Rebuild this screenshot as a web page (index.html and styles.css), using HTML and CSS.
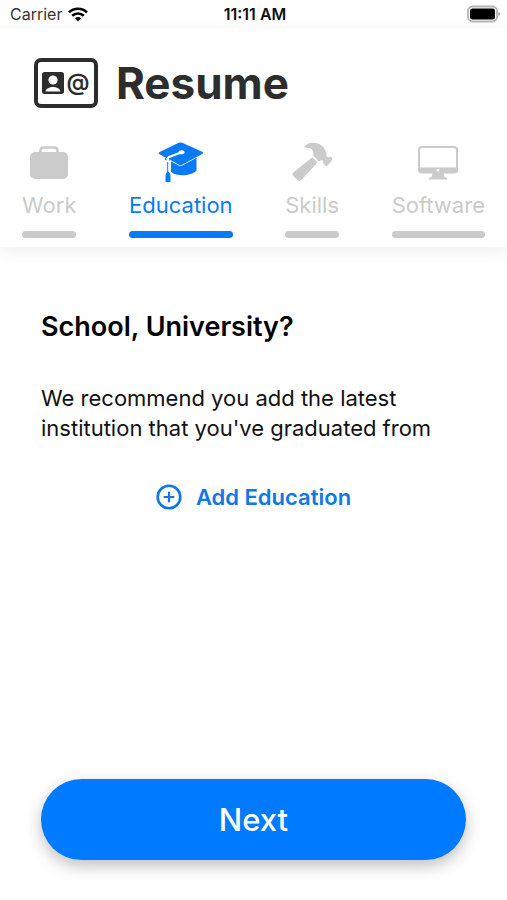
FILE: index.html
```html
<!DOCTYPE html>
<html lang="en">
<head>
<meta charset="utf-8">
<meta name="viewport" content="width=device-width, initial-scale=1">
<title>Resume</title>
<link rel="stylesheet" href="styles.css">
</head>
<body>
<div class="status">
  <div class="carrier">Carrier
    <svg width="20" height="15" viewBox="0 0 20 15" fill="none" stroke="#000" stroke-width="2.6" aria-hidden="true">
      <path d="M1 5.4C6 .6 14 .6 19 5.4"/>
      <path d="M4.2 8.8c3.300-3.100 8.300-3.100 11.600 0"/>
      <path d="M7 11.300c1.800-1.600 4.200-1.600 6 0L10 14.400z" fill="#000" stroke="none"/>
    </svg>
  </div>
  <time class="clock">11:11 AM</time>
  <svg class="battery" width="34" height="18" viewBox="0 0 34 18" aria-hidden="true">
    <rect x="2" y="1.500" width="29" height="15" rx="4.500" fill="#fff" stroke="#b5b5b5" stroke-width="1.800"/>
    <rect x="4" y="3.500" width="25" height="11" rx="2.500"/>
    <path d="M32.300 7c2 .5 2 3.500 0 4z" fill="#999"/>
  </svg>
</div>
<header class="header">
  <div class="brand">
    <svg width="64" height="50" viewBox="0 0 64 50" aria-hidden="true">
      <rect x="2" y="2" width="60" height="46" rx="5" fill="none" stroke="#2d2d2d" stroke-width="4"/>
      <rect x="8" y="14" width="22" height="22" rx="2.500" fill="#2d2d2d"/>
      <circle cx="19" cy="22" r="4.600" fill="#fff"/>
      <path d="M11.500 33.500c1-6 14-6 15 0z" fill="#fff"/>
      <text class="at" x="44" y="32" text-anchor="middle">@</text>
    </svg>
    <h1>Resume</h1>
  </div>
  <nav class="tabs">
    <a class="tab" href="#work">
      <svg width="40" height="42" viewBox="0 0 40 42" fill="currentColor" aria-hidden="true">
        <rect x="1" y="11" width="38" height="27" rx="5"/>
        <path d="M11.500 13V9.500q0-3 3-3h11q3 0 3 3V13" fill="none" stroke="currentColor" stroke-width="2.500"/>
      </svg>
      <span>Work</span>
    </a>
    <a class="tab active" href="#education" aria-current="page">
      <svg width="46" height="42" viewBox="0 0 46 42" fill="currentColor" aria-hidden="true">
        <path d="M7 16h31.500v13.500C33 35.500 19 35.500 13 31V20l-6-1z"/>
        <path d="M20.800 1.800q1.700-.8 3.400 0l20 8.900q1.800 1 0 2.200L24.500 23.600q-2 1-4 0L1.600 13.200q-2-1.200 0-2.300z" stroke="#fff" stroke-width="1.500" paint-order="stroke"/>
        <path d="M23 11.500L11 16q-1.300.6-1.300 2.500V33" fill="none" stroke="#fff" stroke-width="2.200"/>
        <ellipse cx="23.500" cy="11.300" rx="3" ry="2" fill="#fff"/>
        <path d="M9.700 21v12" stroke="currentColor" stroke-width="1"/>
        <path d="M10 30.500q2.500 1 2.500 5V41h-5v-5.500q0-4 2.500-5z"/>
      </svg>
      <span>Education</span>
    </a>
    <a class="tab" href="#skills">
      <svg width="42" height="42" viewBox="0 0 42 42" fill="currentColor" aria-hidden="true">
        <path d="M20 17.300q1.200-1 2.300 0l3.200 3.200q1 1.200 0 2.300L10 39.200q-1.300 1.300-2.800.4L1.700 34.500q-1-1.400.3-2.800z"/>
        <path d="M12.700 6.500C15.500 2 19.500 1 24 2C28 2.300 31 4 33 7C35 10 36 12.500 35.300 15Q36.500 17 38 16.300Q39.300 15 40.600 16.600Q42 18 41 19.500L36.500 24.600Q35.300 25.800 34 24.300L32.500 22.700Q31.500 21.500 32.200 20.200Q31 18.500 29.200 19.800Q28.300 20.500 27.400 19.700L22.700 15Q21.800 14 22.300 12.500C22.500 9 20.500 6 12.700 6.500z"/>
      </svg>
      <span>Skills</span>
    </a>
    <a class="tab" href="#software">
      <svg width="40" height="42" viewBox="0 0 40 42" fill="currentColor" aria-hidden="true">
        <rect x="1" y="6" width="38" height="25.500" rx="3" fill="none" stroke="currentColor" stroke-width="2"/>
        <path d="M1 26.500h38V29q0 3-3 3H4q-3 0-3-3z"/>
        <circle cx="20" cy="29.300" r="1.300" fill="#fff"/>
        <path d="M14.500 32h11l1 4q3 .3 3 2.500h-19q0-2.200 3-2.500z"/>
      </svg>
      <span>Software</span>
    </a>
  </nav>
</header>
<main class="content">
  <h2>School, University?</h2>
  <p>We recommend you add the latest institution that you've graduated from</p>
  <button class="add" type="button">
    <svg width="26" height="26" viewBox="0 0 26 26" fill="none" stroke="currentColor" stroke-width="2.600" stroke-linecap="round" aria-hidden="true">
      <circle cx="13" cy="13" r="11.300"/>
      <path d="M13 8.500v9M8.500 13h9" stroke-width="2.200"/>
    </svg>
    Add Education
  </button>
</main>
<footer class="footer">
  <button class="next" type="button">Next</button>
</footer>
</body>
</html>
```
FILE: styles.css
```css
* {
  box-sizing: border-box;
}

body {
  margin: 0;
  min-height: 100vh;
  display: flex;
  flex-direction: column;
  background: #fff;
  color: #111;
  font-family: Inter, "Liberation Sans", sans-serif;
}

button {
  border: 0;
  font: inherit;
  cursor: pointer;
}

h1,
h2,
p {
  margin: 0;
}

.status {
  display: grid;
  grid-template-columns: 1fr auto 1fr;
  align-items: center;
  height: 28px;
  padding: 0 7px 0 10px;
  font-size: 16px;
}

.carrier {
  display: flex;
  align-items: center;
  gap: 6px;
  color: #333;
}

.clock {
  font-weight: 600;
}

.battery {
  justify-self: end;
}

.header {
  padding: 29px 22px 9px;
  box-shadow: 0 4px 14px rgba(0, 0, 0, 0.07);
}

.brand {
  display: flex;
  align-items: center;
  gap: 18px;
  padding-left: 12px;
  color: #2d2d2d;
}

.at {
  font-size: 23px;
  font-weight: 600;
  fill: #2d2d2d;
}

h1 {
  font-size: 44px;
  line-height: 52px;
  font-weight: 700;
}

.tabs {
  display: flex;
  justify-content: space-between;
  margin-top: 32px;
}

.tab {
  display: flex;
  flex-direction: column;
  align-items: center;
  color: #cbcbcb;
  font-size: 22px;
  line-height: 28px;
  text-decoration: none;
}

.tab span {
  margin-top: 8px;
}

.tab::after {
  content: "";
  width: 100%;
  height: 7px;
  margin-top: 12px;
  border-radius: 4px;
  background: currentColor;
}

.active {
  color: #087af5;
}

.content {
  flex: 1;
  display: flex;
  flex-direction: column;
  padding: 62px 41px 0;
}

h2 {
  color: #000;
  font-size: 27px;
  line-height: 36px;
  font-weight: 600;
}

p {
  margin-top: 38px;
  font-size: 22px;
  line-height: 30px;
}

.add {
  align-self: center;
  display: flex;
  align-items: center;
  gap: 14px;
  margin-top: 38px;
  padding: 0;
  background: none;
  color: #0f77e6;
  font-size: 22px;
  line-height: 32px;
  font-weight: 600;
}

.footer {
  padding: 0 41px 40px;
}

.next {
  width: 100%;
  height: 81px;
  border-radius: 41px;
  background: #007aff;
  box-shadow: 0 6px 16px rgba(0, 0, 0, 0.25);
  color: #fff;
  font-size: 31px;
  font-weight: 500;
}
```
